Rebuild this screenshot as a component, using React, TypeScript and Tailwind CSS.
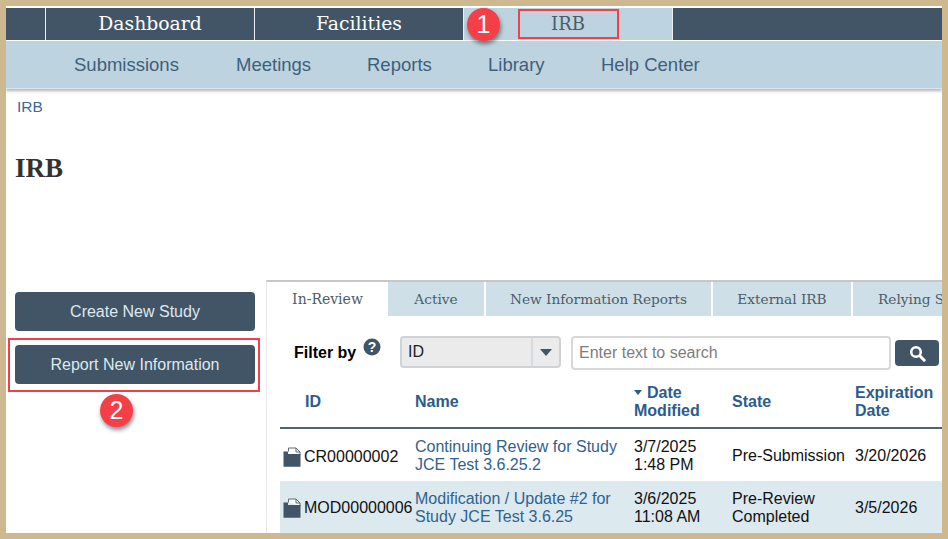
import React from "react";

const slab = "font-['DejaVu_Serif','Liberation_Serif',serif]";
const sans = "font-['Liberation_Sans',Arial,sans-serif]";

function Badge({ n, className }: { n: string; className: string }) {
  return (
    <div className={`absolute w-[33px] h-[33px] rounded-full bg-[#f53f46] text-white flex items-center justify-center text-[25px] leading-none shadow-[1px_3px_4px_rgba(0,0,0,0.45)] ${className}`}>
      {n}
    </div>
  );
}

function DocIcon() {
  return (
    <svg width="18" height="20" viewBox="0 0 18 20" className="shrink-0">
      <path d="M5.5 4.5V1h7.5l4 4v3" fill="#fff" stroke="#5a6b79" strokeWidth="1" />
      <path d="M13 1v4h4" fill="none" stroke="#5a6b79" strokeWidth="1" />
      <path d="M0.5 4.5h4.5v2.5h12.5v12.2c0 .4-.3.6-.6.6H1.1c-.3 0-.6-.2-.6-.6z" fill="#415566" />
    </svg>
  );
}

const navTop = "w-[209px] h-full border-r border-[#e8eef2] flex items-center justify-center text-white text-[18.8px] leading-none";
const tab = "h-full flex items-center justify-center bg-[#cfdfe8] border-r-2 border-white text-[#4c5c68] text-[13.7px]";
const link = "text-[#30628f]";

export default function App() {
  return (
    <div className={`w-[948px] h-[539px] bg-[#cdb88f] pt-[6px] pb-[6px] pl-[6px] pr-[6px] overflow-hidden ${sans}`}>
      <div className="relative w-[936px] h-[527px] bg-white overflow-hidden pt-[2px]">
        <div className={`flex h-[32px] bg-[#415566] ${slab}`}>
          <div className="w-[40px] h-full border-r border-[#e8eef2]" />
          <div className={navTop}>Dashboard</div>
          <div className={navTop}>Facilities</div>
          <div className="w-[209px] h-full bg-[#bdd3df] border-r border-[#e8eef2] flex items-center justify-center text-[#4c5c68] text-[18px] leading-none">IRB</div>
        </div>
        <div className="h-[48px] mt-[1px] bg-[#bdd3df] border-b border-[#dbe6ec] shadow-[0_2px_3px_rgba(0,0,0,0.3)] flex items-center pl-[68px] text-[18.5px] text-[#3f5f7c]">
          <span className="w-[162px]">Submissions</span>
          <span className="w-[131px]">Meetings</span>
          <span className="w-[121px]">Reports</span>
          <span className="w-[113px]">Library</span>
          <span>Help Center</span>
        </div>

        <div className="pl-[11px] pt-[9px] h-[29px] text-[15.5px] leading-[18px] text-[#3b6a98]">IRB</div>
        <h1 className="pl-[9px] mt-[33px] h-[34px] text-[27px] leading-[34px] font-bold text-[#333] font-['Liberation_Serif',serif]">IRB</h1>

        <div className="flex mt-[95px]">
          <div className="w-[260px] shrink-0 pl-[9px] pt-[12px]">
            <div className="w-[240px] h-[39px] rounded-[4px] bg-[#415566] text-[#dfe8ee] flex items-center justify-center text-[16px]">Create New Study</div>
            <div className="w-[240px] h-[39px] mt-[14px] rounded-[4px] bg-[#415566] text-[#dfe8ee] flex items-center justify-center text-[16px]">Report New Information</div>
          </div>

          <div className="flex-1 min-w-0 border-t-[2px] border-l border-[#c4c8ca] border-l-[#e6e8ea]">
            <div className={`flex h-[34px] ${slab}`}>
              <div className="w-[121px] h-full flex items-center justify-center bg-white text-[#4c5c68] text-[14px]">In-Review</div>
              <div className={`w-[98px] ${tab}`}>Active</div>
              <div className={`w-[227px] ${tab}`}>New Information Reports</div>
              <div className={`w-[140px] ${tab}`}>External IRB</div>
              <div className="flex-1 min-w-0 h-full bg-[#cfdfe8] pl-[25px] flex items-center text-[#4c5c68] text-[13.7px] whitespace-nowrap overflow-hidden">Relying Sites</div>
            </div>

            <div className="flex items-start pl-[27px] pt-[20px] h-[52px]">
              <div className="w-[69px] pt-[8px] text-[16px] leading-[18px] font-bold text-black">Filter by</div>
              <svg width="18" height="18" viewBox="0 0 18 18" className="mt-[2px]">
                <circle cx="9" cy="9" r="8.5" fill="#415566" />
                <text x="9" y="14" textAnchor="middle" fill="#fff" fontSize="14" fontWeight="bold" fontFamily="Liberation Sans">?</text>
              </svg>
              <div className="ml-[19px] w-[161px] h-[32px] rounded-[4px] bg-[#ebebeb] border-2 border-[#d0d3d5] flex items-center">
                <span className="flex-1 pl-[6px] text-[16px] text-[#222]">ID</span>
                <span className="w-[28px] h-full border-l-2 border-[#d8dadb] flex items-center justify-center">
                  <span className="w-0 h-0 border-l-[6px] border-r-[6px] border-t-[7px] border-l-transparent border-r-transparent border-t-[#415566]" />
                </span>
              </div>
              <div className="ml-[10px] w-[320px] h-[34px] rounded-[4px] bg-white border-2 border-[#d8d8d8] flex items-center pl-[6px] text-[16px] text-[#7d7d7d]">Enter text to search</div>
              <div className="ml-[4px] mt-[4px] w-[44px] h-[26px] rounded-[4px] bg-[#415566] flex items-center justify-center">
                <svg width="17" height="17" viewBox="0 0 17 17" fill="none" stroke="#fff">
                  <circle cx="7" cy="7" r="4.8" strokeWidth="2.6" />
                  <path d="M10.8 10.8l4.4 4.4" strokeWidth="3" strokeLinecap="round" />
                </svg>
              </div>
            </div>

            <div className="pl-[13px] mt-[13px]">
              <div className="grid grid-cols-[135px_219px_98px_123px_88px] h-[41px] items-center text-[16px] leading-[18px] font-bold text-[#2b5c8c] border-b-[2px] border-[#4f6475] box-content pb-[5px]">
                <span className="pl-[25px]">ID</span>
                <span>Name</span>
                <span>
                  <span className="inline-block w-0 h-0 mr-[5px] mb-[3px] border-l-[4.5px] border-r-[4.5px] border-t-[5px] border-l-transparent border-r-transparent border-t-[#2b5c8c]" />
                  Date<br />Modified
                </span>
                <span>State</span>
                <span className="whitespace-nowrap">Expiration<br />Date</span>
              </div>
              <div className="grid grid-cols-[135px_219px_98px_123px_88px] h-[52px] pt-[2px] items-center text-[16px] leading-[18px] text-[#111]">
                <span className="flex items-center pl-[3px] gap-[3px] pt-[1px]"><DocIcon />CR00000002</span>
                <span className={`${link} pr-[1px]`}>Continuing Review for Study JCE Test 3.6.25.2</span>
                <span>3/7/2025<br />1:48 PM</span>
                <span>Pre-Submission</span>
                <span>3/20/2026</span>
              </div>
              <div className="grid grid-cols-[135px_219px_98px_123px_88px] h-[52px] pt-[2px] items-center text-[16px] leading-[18px] text-[#111] bg-[#dce9ef]">
                <span className="flex items-center pl-[3px] gap-[3px] whitespace-nowrap"><DocIcon />MOD00000006</span>
                <span className={`${link} pr-[1px]`}>Modification / Update #2 for Study JCE Test 3.6.25</span>
                <span>3/6/2025<br />11:08 AM</span>
                <span>Pre-Review<br />Completed</span>
                <span>3/5/2026</span>
              </div>
            </div>
          </div>
        </div>

        <div className="absolute left-[512px] top-[3px] w-[101px] h-[30px] border-2 border-[#f0404a]" />
        <div className="absolute left-[2px] top-[332px] w-[252px] h-[54px] border-2 border-[#f0404a]" />
        <Badge n="1" className="left-[461px] top-[2px]" />
        <Badge n="2" className="left-[94px] top-[388px]" />
      </div>
    </div>
  );
}
